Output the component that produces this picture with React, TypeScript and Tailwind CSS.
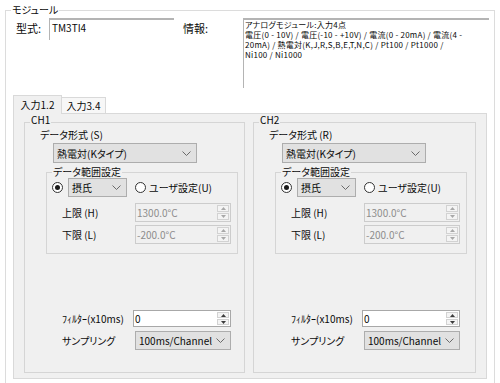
import React from "react";

// small chevron used by the combo boxes
const Chevron = () => (
  <svg width="9" height="5" viewBox="0 0 9 5" className="shrink-0">
    <path d="M0.5 0.5 L4.5 4.5 L8.5 0.5" fill="none" stroke="#6a6a6a" strokeWidth="1" />
  </svg>
);

const Arrow = ({ up, color }: { up: boolean; color: string }) => (
  <svg width="5" height="3" viewBox="0 0 5 3">
    <path d={up ? "M0 3 L2.5 0 L5 3 Z" : "M0 0 L2.5 3 L5 0 Z"} fill={color} />
  </svg>
);

const Combo = ({ text, className }: { text: string; className: string }) => (
  <div
    className={`flex items-center justify-between border border-[#adadad] bg-[#e1e1e1] pl-[3px] pr-[5px] text-[#0a0a0a] ${className}`}
  >
    <span className="whitespace-nowrap">{text}</span>
    <Chevron />
  </div>
);

const Spin = ({
  text,
  disabled,
  className,
}: {
  text: string;
  disabled?: boolean;
  className: string;
}) => (
  <div
    className={`flex items-stretch border ${
      disabled ? "border-[#cccccc] bg-[#f0f0f0] text-[#8d8d8d]" : "border-[#a8a8a8] bg-white text-[#0a0a0a]"
    } ${className}`}
  >
    <span className="flex-1 pl-[1px] flex items-center whitespace-nowrap">{text}</span>
    <div className="w-[14px] flex flex-col p-[1px] gap-[1px]">
      <div className="flex-1 flex items-center justify-center border border-[#d2d2d2] bg-[#f4f4f4]">
        <Arrow up color={disabled ? "#a8a8a8" : "#3c3c3c"} />
      </div>
      <div className="flex-1 flex items-center justify-center border border-[#d2d2d2] bg-[#f4f4f4]">
        <Arrow up={false} color={disabled ? "#a8a8a8" : "#3c3c3c"} />
      </div>
    </div>
  </div>
);

const Radio = ({ checked }: { checked?: boolean }) => (
  <div className="w-[11px] h-[11px] rounded-full border border-[#333333] bg-white flex items-center justify-center shrink-0">
    {checked && <div className="w-[5px] h-[5px] rounded-full bg-[#1a1a1a]" />}
  </div>
);

const Channel = ({ name, key1, width }: { name: string; key1: string; width: string }) => (
  <div className={`relative ${width} h-[251px] border border-[#d5d5d5] flex flex-col shrink-0`}>
    <span className="absolute left-[5px] -top-[9px] px-[1px] bg-[#f0f0f0] leading-[12px]">
      {name}
    </span>

    <div className="mt-[6px] ml-[15px] leading-[12px]">データ形式 ({key1})</div>
    <Combo text="熱電対(Kタイプ)" className="mt-[2px] ml-[28px] w-[144px] h-[20px]" />

    {/* range group */}
    <div className="relative mt-[9px] ml-[21px] w-[192px] h-[82px] border border-[#d5d5d5] flex flex-col">
      <span className="absolute left-[5px] -top-[7px] px-[1px] bg-[#f0f0f0] leading-[12px]">
        データ範囲設定
      </span>
      <div className="mt-[5px] ml-[5px] h-[19px] flex items-center">
        <Radio checked />
        <Combo text="摂氏" className="ml-[5px] w-[59px] h-[19px]" />
        <div className="ml-[8px]">
          <Radio />
        </div>
        <span className="ml-[3px] whitespace-nowrap">ユーザ設定(U)</span>
      </div>
      <div className="mt-[6px] ml-[15px] h-[19px] flex items-center">
        <span className="w-[73px] whitespace-nowrap">上限 (H)</span>
        <Spin text="1300.0°C" disabled className="w-[96px] h-[19px]" />
      </div>
      <div className="mt-[3px] ml-[15px] h-[19px] flex items-center">
        <span className="w-[73px] whitespace-nowrap">下限 (L)</span>
        <Spin text="-200.0°C" disabled className="w-[96px] h-[19px]" />
      </div>
    </div>

    <div className="mt-[56px] ml-[37px] h-[17px] flex items-center">
      <span className="w-[71px] whitespace-nowrap">ﾌｨﾙﾀｰ(x10ms)</span>
      <Spin text="0" className="w-[98px] h-[17px]" />
    </div>
    <div className="mt-[4px] ml-[37px] h-[19px] flex items-center">
      <span className="w-[73px] whitespace-nowrap">サンプリング</span>
      <Combo text="100ms/Channel" className="w-[96px] h-[19px]" />
    </div>
  </div>
);

export default function App() {
  return (
    <div className="w-[500px] h-[383px] overflow-hidden bg-white pt-[10px] pl-[5px] text-[10px] text-[#0a0a0a] font-['Noto_Sans_CJK_JP',sans-serif] [font-feature-settings:'palt']">
      {/* module group */}
      <div className="relative w-[490px] h-[400px] border border-[#dcdcdc] flex flex-col">
        <span className="absolute left-[5px] -top-[8px] px-[1px] bg-white leading-[14px]">モジュール</span>

        <div className="mt-[7px] ml-[10px] flex items-start">
          <span className="w-[33px] mt-[3px] text-[11px] leading-[14px]">型式:</span>
          <div className="w-[125px] h-[22px] border-t-2 border-l border-[#b4b4b4] pl-[2px] pt-[1px] leading-[14px]">
            TM3TI4
          </div>
          <span className="ml-[9px] w-[60px] mt-[3px] text-[11px] leading-[14px]">情報:</span>
          <div className="w-[246px] h-[70px] border-t-2 border-l border-[#b4b4b4] pl-[1px] text-[8px] tracking-[0.25px] leading-[10px] whitespace-nowrap overflow-hidden">
            <div className="h-[10px]">アナログモジュール:入力4点</div>
            <div className="h-[10px]">電圧(0 - 10V) / 電圧(-10 - +10V) / 電流(0 - 20mA) / 電流(4 -</div>
            <div className="h-[10px]">20mA) / 熱電対(K,J,R,S,B,E,T,N,C) / Pt100 / Pt1000 /</div>
            <div className="h-[10px]">Ni100 / Ni1000</div>
          </div>
        </div>

        {/* tabs */}
        <div className="mt-[7px] ml-[7px] w-[474px] flex flex-col">
          <div className="h-[19px] -mb-px relative z-10 flex items-start">
            <div className="w-[49px] h-[19px] border border-b-0 border-[#d9d9d9] bg-[#f0f0f0] flex items-center justify-center leading-[14px]">
              入力1.2
            </div>
            <div className="mt-[2px] w-[44px] h-[16px] border border-l-0 border-b-0 border-[#d9d9d9] bg-[#f7f7f7] flex items-center justify-center leading-[14px]">
              入力3.4
            </div>
          </div>
          <div className="h-[266px] border border-[#d9d9d9] bg-[#f0f0f0] flex items-start pt-[8px] pl-[10px] gap-[8px]">
            <Channel name="CH1" key1="S" width="w-[221px]" />
            <Channel name="CH2" key1="R" width="w-[223px]" />
          </div>
        </div>
      </div>
    </div>
  );
}
